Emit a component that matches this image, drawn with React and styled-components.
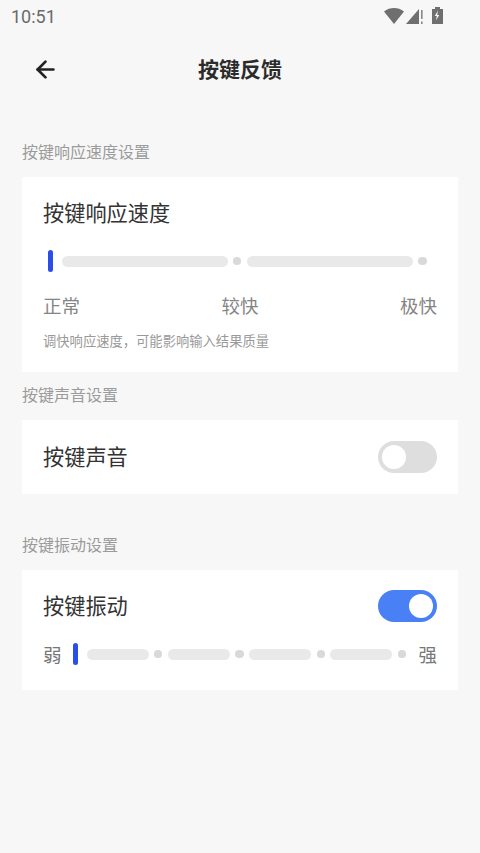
import React from "react"
import styled, { createGlobalStyle } from "styled-components"
import { ArrowLeft } from "lucide-react"

const Global = createGlobalStyle`
  html, body { margin: 0; padding: 0; background: #f7f7f7; }
  * { box-sizing: border-box; }
  body { font-family: "Noto Sans CJK SC", "Noto Sans", sans-serif; }
`

const Page = styled.div`
  width: 480px;
  height: 853px;
  background: #f7f7f7;
  overflow: hidden;
`

const StatusBar = styled.div`
  height: 34px;
  padding: 0 24px 2px 11px;
  display: flex;
  align-items: center;
  justify-content: space-between;
`

const Time = styled.span`
  font-family: Roboto, sans-serif;
  font-size: 18px;
  color: #6a6a6a;
`

const StatusIcons = styled.svg`
  display: block;
`

const Header = styled.div`
  height: 70px;
  padding-left: 32px;
  display: flex;
  align-items: center;
  position: relative;
`

const Title = styled.h1`
  position: absolute;
  left: 0;
  right: 0;
  margin: 0;
  padding-bottom: 2px;
  text-align: center;
  font-size: 21px;
  font-weight: 700;
  color: #2b2b2b;
`

const Content = styled.div`
  padding: 0 22px;
`

const SectionLabel = styled.div`
  height: ${(p) => p.$h}px;
  padding-bottom: 18px;
  display: flex;
  align-items: flex-end;
  font-size: 16px;
  line-height: 16px;
  color: #9b9b9b;
`

const Card = styled.div`
  background: #fff;
  padding: ${(p) => p.$pad};
  height: ${(p) => p.$h}px;
`

const Row = styled.div`
  display: flex;
  align-items: center;
  justify-content: space-between;
`

const RowTitle = styled.div`
  font-size: 21.2px;
  line-height: 30px;
  padding-bottom: 2px;
  color: #333;
`

const Track = styled.div`
  display: flex;
  align-items: center;
  gap: 5.5px;
  flex: 1;
  height: 22px;
`

const Thumb = styled.div`
  width: 5px;
  height: 22px;
  border-radius: 3px;
  background: #2b4de8;
  flex: none;
  margin-right: 3px;
`

const Segment = styled.div`
  height: 11px;
  width: ${(p) => p.$w}px;
  border-radius: 6px;
  background: #e9e9e9;
  flex: none;
`

const Dot = styled.div`
  width: 8.3px;
  height: 8px;
  border-radius: 50%;
  background: #d9d9d9;
  flex: none;
`

const SpeedTrack = styled.div`
  margin: 21px 0 0 5px;
`

const Ticks = styled.div`
  display: flex;
  justify-content: space-between;
  margin-top: 19px;
  font-size: 18.5px;
  line-height: 28px;
  color: #858585;
`

const Note = styled.div`
  margin-top: 12px;
  font-size: 13.3px;
  line-height: 20px;
  color: #999;
`

const Switch = styled.div`
  width: 59px;
  height: 32px;
  border-radius: 16px;
  padding: 4px;
  background: ${(p) => (p.$on ? "#4a80f5" : "#dedede")};
  display: flex;
  justify-content: ${(p) => (p.$on ? "flex-end" : "flex-start")};
`

const Knob = styled.div`
  width: 24px;
  height: 24px;
  border-radius: 50%;
  background: #fff;
`

const StrengthRow = styled.div`
  display: flex;
  align-items: center;
  margin-top: 20px;
  height: 24px;
`

const EndLabel = styled.span`
  font-size: 18.5px;
  line-height: 24px;
  color: #777;
  width: ${(p) => p.$w}px;
  text-align: ${(p) => p.$align};
  flex: none;
`

const Back = styled(ArrowLeft)`
  display: block;
  color: #222;
`

export default function App() {
  return (
    <Page>
      <Global />
      <StatusBar>
        <Time>10:51</Time>
        <StatusIcons width="76" height="20" viewBox="0 0 76 20">
          <path d="M4 5.5C7 3 10.5 2 14 2s7 1 10 3.5L14 18Z" fill="#6f6f6f" />
          <path d="M26 18L39 3V18Z" fill="#6f6f6f" />
          <rect x="41" y="4" width="1.6" height="9" fill="#888" />
          <rect x="41" y="15.5" width="1.6" height="2.5" fill="#888" />
          <path d="M52 3h3V1h5v2h3v15H52Z" fill="#6f6f6f" />
          <path d="M58 4.5l-3.2 5.5h2l-.8 4.5 3.2-5.6h-2Z" fill="#f7f7f7" />
        </StatusIcons>
      </StatusBar>
      <Header>
        <Back size={27} strokeWidth={2.4} />
        <Title>按键反馈</Title>
      </Header>
      <Content>
        <SectionLabel $h={73}>按键响应速度设置</SectionLabel>
        <Card $h={195} $pad="20px 21px 0">
          <RowTitle>按键响应速度</RowTitle>
          <SpeedTrack>
            <Track>
              <Thumb />
              <Segment $w={166} />
              <Dot />
              <Segment $w={166} />
              <Dot />
            </Track>
          </SpeedTrack>
          <Ticks>
            <span>正常</span>
            <span>较快</span>
            <span>极快</span>
          </Ticks>
          <Note>调快响应速度，可能影响输入结果质量</Note>
        </Card>
        <SectionLabel $h={48}>按键声音设置</SectionLabel>
        <Card $h={74} $pad="21px">
          <Row>
            <RowTitle>按键声音</RowTitle>
            <Switch>
              <Knob />
            </Switch>
          </Row>
        </Card>
        <SectionLabel $h={76}>按键振动设置</SectionLabel>
        <Card $h={120} $pad="20px 21px 0">
          <Row>
            <RowTitle>按键振动</RowTitle>
            <Switch $on>
              <Knob />
            </Switch>
          </Row>
          <StrengthRow>
            <EndLabel $w={30} $align="left">弱</EndLabel>
            <Track>
              <Thumb />
              <Segment $w={62} />
              <Dot />
              <Segment $w={62} />
              <Dot />
              <Segment $w={62} />
              <Dot />
              <Segment $w={62} />
              <Dot />
            </Track>
            <EndLabel $w={24} $align="right">强</EndLabel>
          </StrengthRow>
        </Card>
      </Content>
    </Page>
  )
}
